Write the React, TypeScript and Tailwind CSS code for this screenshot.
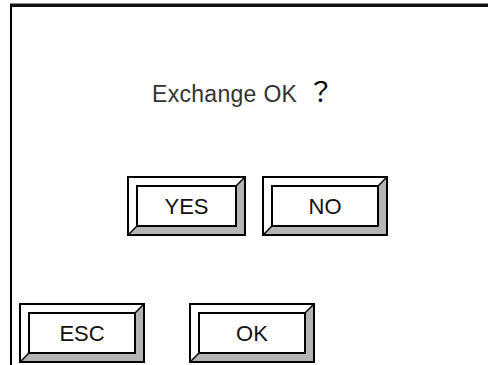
import type { ReactNode } from "react";

function BevelButton({ children, className }: { children: ReactNode; className: string }) {
  return (
    <div className={`relative h-[60px] border-2 border-black bg-white ${className}`}>
      <div className="relative h-full border-[7px] border-t-white border-l-white border-r-[#b4b4b4] border-b-[#b4b4b4]">
        <div className="flex h-full items-center justify-center border-2 border-black bg-white text-[22px] text-[#111]">
          {children}
        </div>
      </div>
      {/* corner joins of the bevel */}
      <svg className="absolute right-0 top-0 h-[9px] w-[9px]" viewBox="0 0 9 9">
        <line x1="9" y1="0" x2="0" y2="9" stroke="#000" strokeWidth="1.5" />
      </svg>
      <svg className="absolute bottom-0 left-0 h-[9px] w-[9px]" viewBox="0 0 9 9">
        <line x1="9" y1="0" x2="0" y2="9" stroke="#000" strokeWidth="1.5" />
      </svg>
    </div>
  );
}

export default function App() {
  return (
    <div className="h-[365px] w-[488px] overflow-hidden bg-white font-['Liberation_Sans',Arial,sans-serif]">
      <div className="ml-[10px] mt-[4px] flex h-[361px] flex-col border-l-2 border-t-[3px] border-black border-t-[#111] shadow-[0_-1px_0_#888]">
        <p className="mt-[70px] pl-[140px] text-[23px] leading-[27px] tracking-[0.3px] text-[#333]">
          Exchange OK
          <span className="ml-[10px] font-['Noto_Sans_CJK_JP',sans-serif] text-[27px] leading-[27px] text-black">？</span>
        </p>
        <div className="mt-[68px] flex gap-[16px] pl-[115px]">
          <BevelButton className="w-[119px]">YES</BevelButton>
          <BevelButton className="w-[126px]">NO</BevelButton>
        </div>
        <div className="mt-[67px] flex gap-[44px] pl-[7px]">
          <BevelButton className="w-[126px]">ESC</BevelButton>
          <BevelButton className="w-[126px]">OK</BevelButton>
        </div>
      </div>
    </div>
  );
}
